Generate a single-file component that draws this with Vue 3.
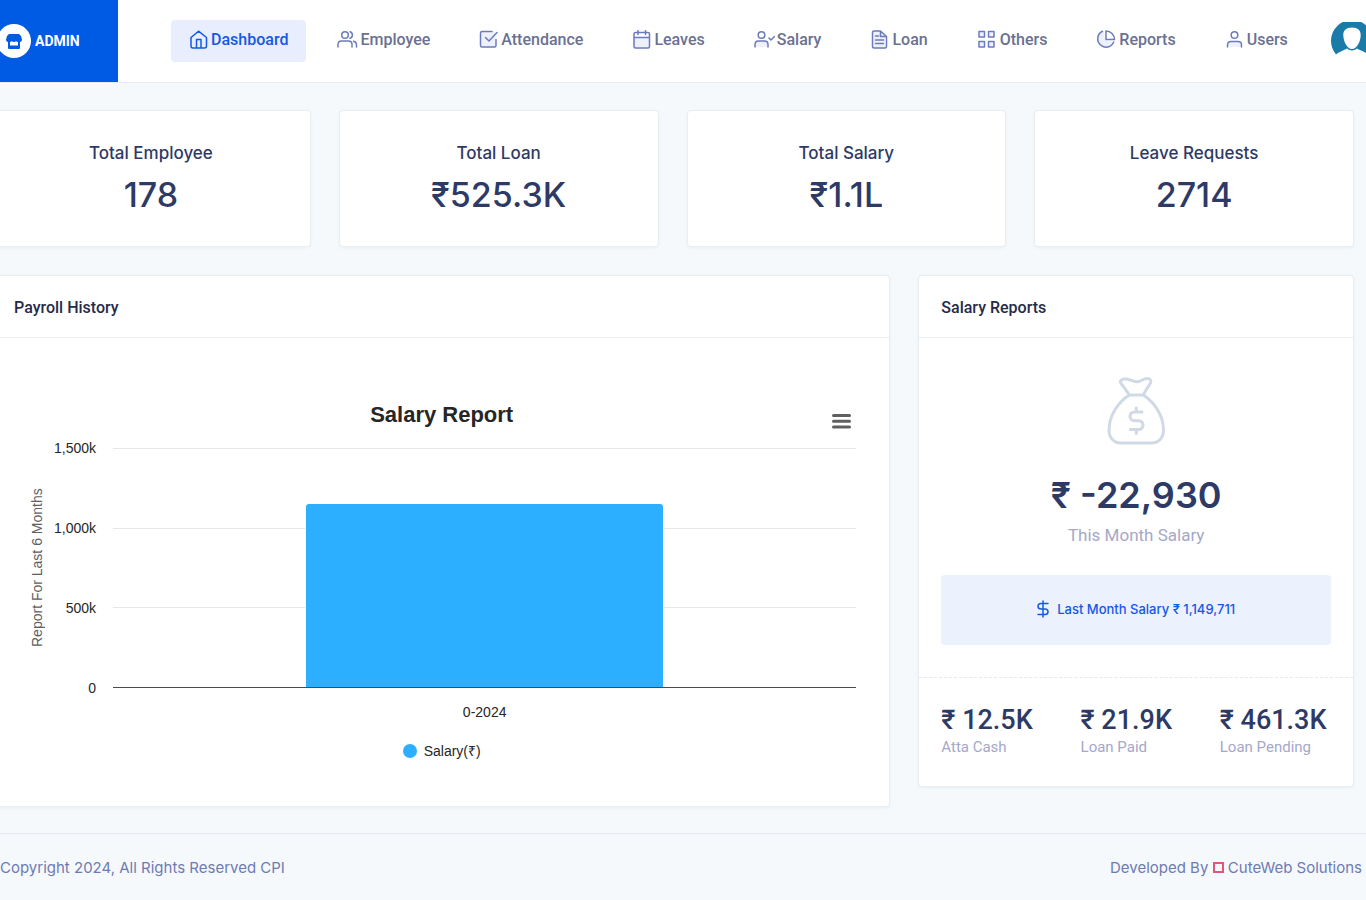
<template>
  <div class="page">
    <header class="topbar">
      <a class="brand" href="#">
        <span class="brand-mark">
          <svg width="16" height="15" viewBox="0 0 16 15">
            <path fill="#005be4" d="M3 0h10l2 2 1 3.500C16 7 15.200 8 14 8v5.500c0 1-.500 1.500-1.500 1.500h-9C2.500 15 2 14.500 2 13.500V8C.800 8 0 7 0 5.500L1 2zM4 8v3.500h8V8c-.800 0-1.300-.200-2-.700-.600.500-1.200.700-2 .700s-1.400-.200-2-.700c-.700.500-1.200.700-2 .700z" />
          </svg>
        </span>
        <span>ADMIN</span>
      </a>
      <nav class="menu">
        <a v-for="item in menu" :key="item.label" href="#" class="menu-item"
          :class="{ active: activeItem === item.label }" @click.prevent="activeItem = item.label">
          <svg :width="item.width" height="20" :viewBox="`0 0 ${item.width} 20`" class="menu-icon">
            <path v-if="item.fill" class="tint" :d="item.fill" />
            <path :d="item.path" />
          </svg>
          <span>{{ item.label }}</span>
        </a>
      </nav>
      <button class="avatar" type="button" aria-label="Account">
        <svg width="42" height="42" viewBox="0 0 42 42">
          <path fill="#1a7ba8" d="M5 32.500A21 21 0 1 1 37 32.500C34.500 29.800 30 29 26 26.500Q21 30.500 16 26.500C12 29 7.500 29.800 5 32.500z" />
          <path fill="#fff" d="M21 5.500c6 0 9 3 8.700 8-.300 6-3.700 13.500-8.700 13.500s-8.400-7.500-8.700-13.500c-.300-5 2.700-8 8.700-8z" />
        </svg>
      </button>
    </header>

    <main class="content">
      <section v-for="stat in stats" :key="stat.label" class="card stat">
        <h2>{{ stat.label }}</h2>
        <p>{{ stat.value }}</p>
      </section>

      <section class="card payroll">
        <h3 class="card-title">Payroll History</h3>
        <div class="chart">
          <div class="chart-head">
            <h4>Salary Report</h4>
            <button type="button" class="chart-menu" aria-label="Chart menu">
              <svg width="19" height="15" viewBox="0 0 19 15">
                <path d="M1.500 1.500h16M1.500 7.200h16M1.500 13h16" stroke="#606060" stroke-width="3" stroke-linecap="round" />
              </svg>
            </button>
          </div>
          <div class="chart-body">
            <div class="axis-name">Report For Last 6 Months</div>
            <div class="ticks">
              <span v-for="tick in ticks" :key="tick">{{ tick }}</span>
            </div>
            <div class="plot">
              <div class="lines"><i></i><i></i><i></i></div>
              <div class="bar" :style="{ height: barHeight }"></div>
            </div>
            <div class="category">0-2024</div>
          </div>
          <div class="legend"><i></i>Salary(₹)</div>
        </div>
      </section>

      <section class="card reports">
        <h3 class="card-title">Salary Reports</h3>
        <div class="summary">
          <svg class="bag" width="58" height="68" viewBox="0 0 58 68">
            <path d="M22.300 18C19.500 13.500 17 10 14 6.500 12 3.500 15.500 1.500 19 2c4 .300 7 2.700 11 2.700S36.500 1.500 40 1.500c3 0 5 2.200 3.500 4.500C41 10 38.500 13.500 36.300 18z" />
            <path d="M22.300 18C12 24.500 2 38 2 53c0 7.500 4.500 13 12 13h30.500c7.500 0 12-5.500 12-13C56.500 38 46.500 24.500 36.300 18" />
            <path d="M29.300 31v4M29.300 52.500v4M35 35h-7.500c-6 0-6 8.700 0 8.700h4c6 0 6 8.800 0 8.800h-8" />
          </svg>
          <p class="amount">₹ -22,930</p>
          <p class="caption">This Month Salary</p>
          <div class="last-month">
            <svg width="12" height="18" viewBox="0 0 12 18">
              <path d="M6 1v16M11 3.500H4C0 3.500 0 9 4 9h4c4 0 4 5.500 0 5.500H1" />
            </svg>
            <span>Last Month Salary ₹ 1,149,711</span>
          </div>
        </div>
        <dl class="totals">
          <div v-for="total in totals" :key="total.label">
            <dd>{{ total.value }}</dd>
            <dt>{{ total.label }}</dt>
          </div>
        </dl>
      </section>
    </main>

    <footer class="footer">
      <span>Copyright 2024, All Rights Reserved CPI</span>
      <span class="credit">Developed By <i class="heart"></i> <a href="#">CuteWeb Solutions</a></span>
    </footer>
  </div>
</template>

<script setup>
import { ref } from 'vue';

const activeItem = ref('Dashboard');

// Top menu, icons are drawn on a 20px high grid
const menu = [
  { label: 'Dashboard', width: 20, path: 'M2 7.500L9.500 1.200 17.500 7.500V16q0 2-2 2H4q-2 0-2-2zM7.500 18V9.500h4.500V18' },
  { label: 'Employee', width: 21, path: 'M1 17v-2.500q0-3.500 3.500-3.500h7q3.500 0 3.500 3.500V17M8 1.700a3.300 3.300 0 1 1 0 6.600a3.300 3.300 0 1 1 0-6.600M13 1.700a3.400 3.400 0 0 1 0 6.500M16.500 11.300q3 .700 3 3.500V17' },
  { label: 'Attendance', width: 20, fill: 'M1.500 2h15v15h-15z', path: 'M13 1.500H3q-1.500 0-1.500 1.500v12.500Q1.500 17 3 17h12.500q1.500 0 1.500-1.500V9.500M6.500 7.500l3.500 3.500 8-8.500' },
  { label: 'Leaves', width: 20, fill: 'M2 7h15v10H2z', path: 'M3.500 2.500h12.500q1.500 0 1.500 1.500v12.500q0 1.500-1.500 1.500h-12.500q-1.500 0-1.500-1.500V4q0-1.500 1.500-1.500M2 7.500h15.500M6 .500v4M13.500 .500v4' },
  { label: 'Salary', width: 21, fill: 'M1 17v-3q0-3 3-3h7q3 0 3 3v3z', path: 'M1 17v-2.500q0-3.500 3.500-3.500h6q3.500 0 3.500 3.500V17M7.500 1.700a3.300 3.300 0 1 1 0 6.600a3.300 3.300 0 1 1 0-6.600M15 8l2 2 3.500-3.500' },
  { label: 'Loan', width: 20, fill: 'M2 1h9l4 4v13H2z', path: 'M10.500 1H4Q2.500 1 2.500 2.500v14Q2.500 18 4 18h11q1.500 0 1.500-1.500V6.500zv5.500h6M5.500 6h3M5.500 10h8M5.500 13.500h8' },
  { label: 'Others', width: 21, fill: 'M2 2h5v5H2zM12 2h5v5h-5zM2 11h5v5H2zM12 11h5v5h-5z', path: 'M2 1.500h5.500V7H2zM11.500 1.500H17V7h-5.500zM2 11.500h5.500V17H2zM11.500 11.500H17V17h-5.500z' },
  { label: 'Reports', width: 21, fill: 'M8 1.500a8 8 0 1 0 9 11l-8-2.500z', path: 'M6.500 1.300A8.300 8.300 0 1 0 17.700 12M10 1v8.500h8.500A8.500 8.500 0 0 0 10 1z' },
  { label: 'Users', width: 20, fill: 'M2.500 17v-3q0-3 3-3h8q3 0 3 3v3z', path: 'M2.500 17v-2q0-3.500 3.500-3.500h7q3.500 0 3.500 3.500V17M9.500 1.700a3.300 3.300 0 1 1 0 6.600a3.300 3.300 0 1 1 0-6.600' },
];

const stats = [
  { label: 'Total Employee', value: '178' },
  { label: 'Total Loan', value: '₹525.3K' },
  { label: 'Total Salary', value: '₹1.1L' },
  { label: 'Leave Requests', value: '2714' },
];

const totals = [
  { label: 'Atta Cash', value: '₹ 12.5K' },
  { label: 'Loan Paid', value: '₹ 21.9K' },
  { label: 'Loan Pending', value: '₹ 461.3K' },
];

// Chart scale
const ticks = ['1,500k', '1,000k', '500k', '0'];
const barHeight = `${(1149711 / 1500000) * 100}%`;
</script>

<style>
body {
  margin: 0;
  background: #f5f9fc;
}
</style>

<style scoped>
.page {
  min-height: 100vh;
  overflow: hidden;
  font-family: Roboto, "Liberation Sans", sans-serif;
  color: #2e3a66;
}

h2,
h3,
h4,
p,
dl,
dd {
  margin: 0;
}

a {
  color: inherit;
  text-decoration: none;
}

button {
  padding: 0;
  border: none;
  background: none;
  cursor: pointer;
}

svg {
  display: block;
  flex: none;
}

/* Top bar */
.topbar {
  display: flex;
  height: 82px;
  background: #fff;
  border-bottom: 1px solid #e8edf4;
}

.brand {
  display: flex;
  align-items: center;
  gap: 4px;
  width: 121px;
  margin-left: -3px;
  background: #005be4;
  color: #fff;
  font-size: 14px;
  font-weight: 700;
}

.brand-mark {
  display: flex;
  align-items: center;
  justify-content: center;
  width: 34px;
  height: 34px;
  border-radius: 50%;
  background: #fff;
}

.menu {
  display: flex;
  align-items: flex-start;
  gap: 13px;
  margin: 20px 0 0 53px;
}

.menu-item {
  display: flex;
  align-items: center;
  gap: 2px;
  padding: 10px 18px 12px;
  border-radius: 4px;
  color: #6a7191;
  font-size: 16px;
  line-height: 20px;
  font-weight: 500;
}

.menu-item.active {
  background: #e8eefe;
  color: #1558e6;
}

.menu-icon {
  fill: none;
  stroke: #6c7bbb;
  stroke-width: 1.5;
  stroke-linecap: round;
  stroke-linejoin: round;
}

.menu-icon .tint {
  fill: #eef1fb;
  stroke: none;
}

.active .menu-icon {
  stroke: #1558e6;
}

.avatar {
  align-self: flex-start;
  margin: 22px -7px 0 auto;
}

/* Cards */
.content {
  display: grid;
  grid-template-columns: repeat(12, minmax(0, 1fr));
  align-items: start;
  gap: 28px;
  margin: 27px 12px 26px -9px;
}

.card {
  background: #fff;
  border: 1px solid #e9eef3;
  border-radius: 4px;
  box-shadow: 0 1px 3px rgba(54, 74, 99, 0.06);
}

.card-title {
  padding: 21px 22px 18px;
  border-bottom: 1px solid #e9eef3;
  color: #262b49;
  font-size: 16px;
  line-height: 22px;
  font-weight: 500;
}

.stat {
  grid-column: span 3;
  padding: 30px 16px;
  text-align: center;
  font-family: Inter, sans-serif;
}

.stat h2 {
  margin-bottom: 9px;
  font-size: 17px;
  line-height: 24px;
  font-weight: 500;
}

.stat p {
  font-size: 34px;
  line-height: 42px;
  font-weight: 500;
}

.payroll {
  grid-column: span 8;
}

.reports {
  grid-column: span 4;
}

/* Chart */
.chart {
  padding: 63px 33px 45px 35px;
  font-family: "Liberation Sans", Arial, sans-serif;
  font-size: 14px;
  line-height: 20px;
  color: #262626;
}

.chart-head {
  display: grid;
  grid-template-columns: 1fr auto 1fr;
  align-items: end;
  margin-bottom: 19px;
}

.chart-head h4 {
  grid-column: 2;
  font-size: 22px;
  line-height: 28px;
  font-weight: 700;
}

.chart-menu {
  justify-self: end;
  margin-right: 5px;
}

.chart-body {
  display: grid;
  grid-template-columns: 20px 49px minmax(0, 1fr);
  grid-template-rows: 240px auto;
}

.axis-name {
  writing-mode: vertical-rl;
  transform: rotate(180deg);
  text-align: center;
  color: #606060;
}

.ticks {
  display: flex;
  flex-direction: column;
  justify-content: space-between;
  margin: -10px 0;
  text-align: right;
}

.plot {
  position: relative;
  margin-left: 17px;
  border-bottom: 1px solid #4a4a4a;
}

.lines {
  display: flex;
  flex-direction: column;
  height: 100%;
}

.lines i {
  flex: 1;
  border-top: 1px solid #e6e6e6;
}

.bar {
  position: absolute;
  bottom: 0;
  left: 26%;
  width: 48%;
  border-radius: 3px 3px 0 0;
  background: #2caffe;
  box-shadow: 0 0 0 1px #fff;
  clip-path: inset(-1px -1px 0);
}

.category {
  grid-column: 3;
  margin: 14px 0 19px 17px;
  text-align: center;
}

.legend {
  display: flex;
  align-items: center;
  justify-content: center;
  gap: 7px;
}

.legend i {
  width: 14px;
  height: 14px;
  border-radius: 50%;
  background: #2caffe;
}

/* Salary reports */
.summary {
  display: flex;
  flex-direction: column;
  align-items: center;
  padding: 39px 22px 32px;
  border-bottom: 1px dashed #e4e9ef;
}

.bag {
  fill: none;
  stroke: #d0d9e6;
  stroke-width: 3;
  stroke-linecap: round;
  stroke-linejoin: round;
}

.amount {
  margin-top: 28px;
  font-family: Inter, sans-serif;
  font-size: 36px;
  line-height: 44px;
  font-weight: 600;
}

.caption {
  margin-top: 6px;
  color: #a5a8c8;
  font-size: 17px;
  line-height: 24px;
}

.last-month {
  display: flex;
  align-items: center;
  justify-content: center;
  gap: 8px;
  align-self: stretch;
  padding: 25px 0 27px;
  margin-top: 28px;
  border-radius: 4px;
  background: #ebf1fd;
  color: #1558e6;
  font-family: Inter, sans-serif;
  font-size: 13px;
  line-height: 18px;
  font-weight: 500;
}

.last-month svg {
  fill: none;
  stroke: #1558e6;
  stroke-width: 1.5;
  stroke-linecap: round;
}

.totals {
  display: grid;
  grid-template-columns: repeat(3, minmax(0, 1fr));
  gap: 28px;
  padding: 26px 22px 28px;
  white-space: nowrap;
}

.totals div {
  display: flex;
  flex-direction: column;
}

.totals dd {
  font-size: 27px;
  line-height: 32px;
  font-weight: 500;
}

.totals dt {
  color: #a5a8c8;
  font-size: 15px;
  line-height: 22px;
}

/* Footer */
.footer {
  display: flex;
  justify-content: space-between;
  padding: 22px 4px 22px 0;
  border-top: 1px solid #e4e9ef;
  color: #6e7bb3;
  font-family: Inter, sans-serif;
  font-size: 15px;
  line-height: 24px;
}

.heart {
  display: inline-block;
  width: 7px;
  height: 7px;
  border: 2px solid #e85377;
}
</style>
